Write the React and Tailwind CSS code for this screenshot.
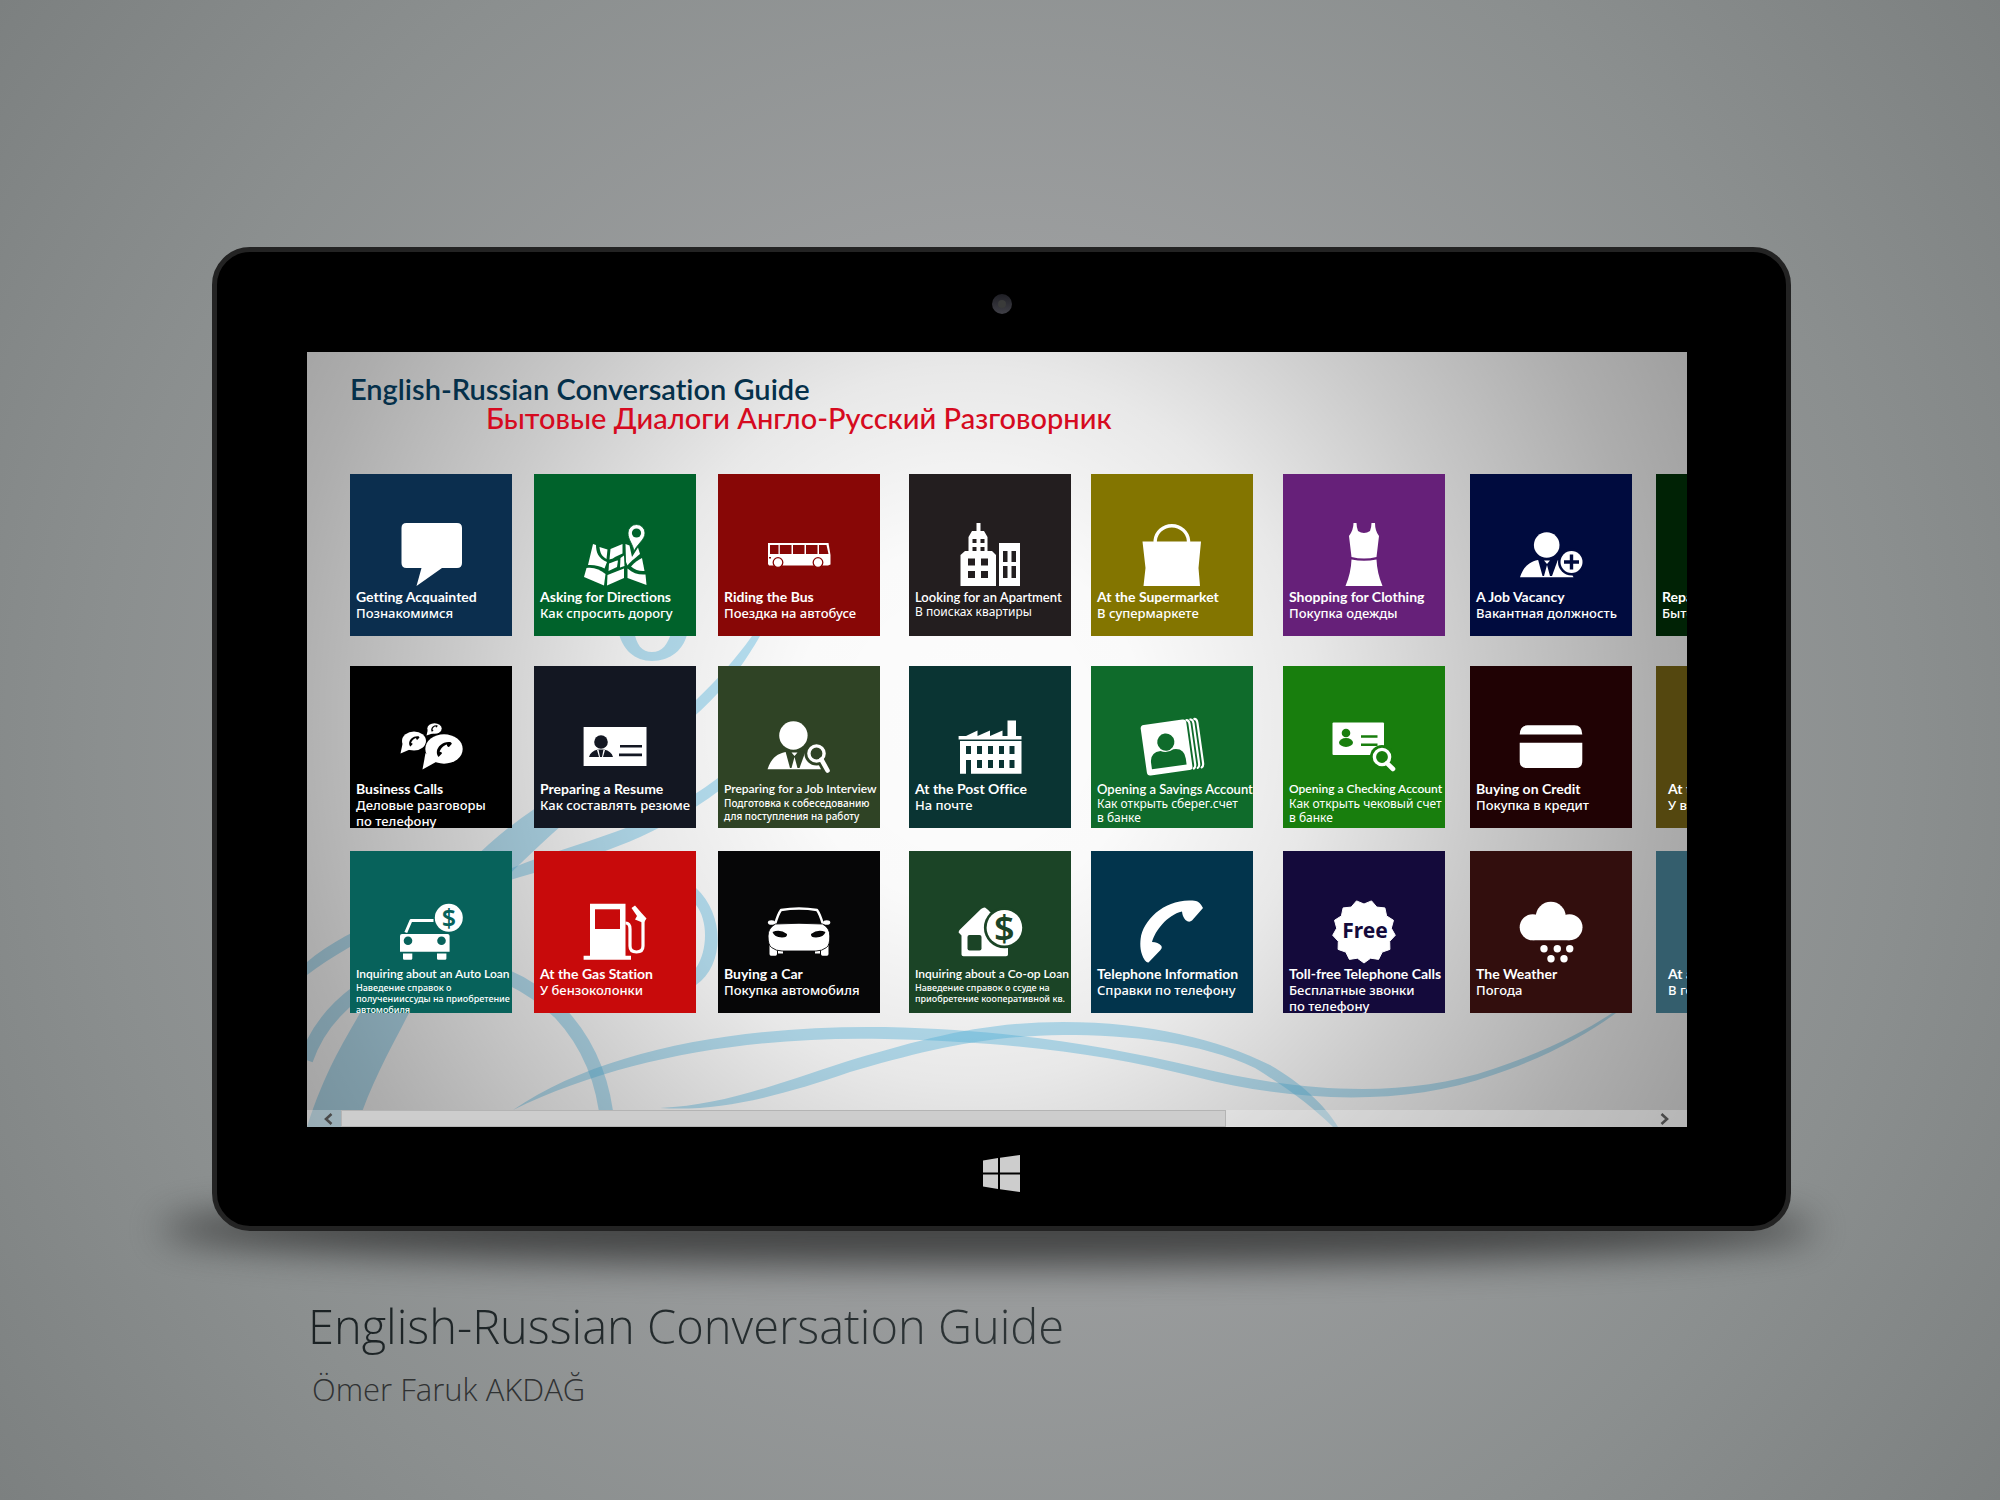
import React from 'react';

const heading = "font-['Lato','Noto_Sans',sans-serif] [font-variant-ligatures:none]";
const caption = "font-['Noto_Sans','Open_Sans',sans-serif]";

/* ---------- tile pictograms, all drawn in a 162 x 115 box ---------- */

function Suit({ bg }) {
  return (
    <>
      <path d="M50 103.3C53 94 58 88 68 86H87C93 88 98 92 103.5 103.3Z" fill="#fff" />
      <path d="M68 85.5H88L82 102H72.5Z" fill={bg} />
      <path d="M74 86.5H80L77 90Z M77 91L80 102H74Z" fill="#fff" />
    </>
  );
}

function Lens({ cx, cy, r, hx, hy, bg }) {
  return (
    <>
      <circle cx={cx} cy={cy} r={r + 4.5} fill={bg} />
      <circle cx={cx} cy={cy} r={r} fill={bg} stroke="#fff" strokeWidth="3.4" />
      <path d={`M${cx + r * 0.65} ${cy + r * 0.8}L${hx} ${hy}`} stroke="#fff" strokeWidth="4.6" strokeLinecap="round" />
    </>
  );
}

function Dollar({ cx, cy, size, fill }) {
  return (
    <text x={cx} y={cy} fill={fill} fontSize={size} fontWeight="600" textAnchor="middle" fontFamily="Noto Sans, sans-serif">
      $
    </text>
  );
}

function Handset({ x, y, s, fill }) {
  return (
    <path
      transform={`translate(${x} ${y}) scale(${s})`}
      fill={fill}
      d="M105 50Q109 51 112 57L101 69.5Q98 72 94.500 69Q91.500 66 91 60.500C76 64 64 80 61 91Q67 91 70.500 95Q71.500 97 69.500 99L57.500 111.500Q56 112 54 109.500C49 102 49 94 49.600 88C52 68 76 46 105 50Z"
    />
  );
}

function Badge() {
  const points = Array.from({ length: 26 }, (_, i) => {
    const r = i % 2 === 0 ? 31.5 : 27.5;
    const a = (Math.PI * i) / 13 + Math.PI / 2;
    return `${(81 + r * Math.cos(a)).toFixed(1)},${(80.5 + r * Math.sin(a)).toFixed(1)}`;
  }).join(' ');
  return <polygon points={points} fill="#fff" stroke="#fff" strokeWidth="1" strokeLinejoin="round" />;
}

const icons = {
  speech: () => (
    <path fill="#fff" d="M56.500 49H107Q112 49 112 54V89Q112 94 107 94H92L66.500 112L71.500 94H56.500Q51.500 94 51.500 89V54Q51.500 49 56.500 49Z" />
  ),
  map: ({ bg }) => (
    <g fill="#fff">
      <path d="M59 70L62 71C62 78 64 84 73 88L70.500 94.500C66 92 60 90.500 54 91Z" />
      <path d="M65.500 73L73.500 75.500L72.500 85C67 82 66 78 65.500 73Z" />
      <path d="M52.500 94C60 93 66 95.500 71.500 100L70 111.500L50 103Z" />
      <path d="M76.500 75L88.500 70V79.500L81 83C79 84.500 77.500 85 75.500 85.500Z" />
      <path d="M75 89.500C79 88 82 86.500 84 86.500L83 93L74.500 97Z" />
      <path d="M86.500 84L90 81.500L90.500 92L86 93.500Z" />
      <path d="M73.500 101L90 94.500V104L73 111.500Z" />
      <path d="M91.500 70L95.500 71.500L98 83L104 73.500L106 80C100 85 96 88 93.500 91.500L92 88Z" />
      <path d="M97 92.500C101 88 104.500 86 108 84L110.500 97C106 97.500 101 96 97 92.500Z" />
      <path d="M93.500 94.500C99 99.500 105 101 111.500 100.500L112.500 111L93.500 104Z" />
      <path d="M100 77.500C99 70 94 66 94 59A8.500 8.500 0 0 1 111 59C111 66 103 70 100 77.500Z" stroke={bg} strokeWidth="0.8" />
      <circle cx="102.500" cy="59" r="4.600" fill={bg} />
    </g>
  ),
  bus: ({ bg }) => (
    <>
      <path fill="#fff" d="M50 69H110.500L112.500 81V90.500L110 91.500H51L50 90Z" />
      <path fill={bg} d="M52 71H60.500V80H52Z M61.800 71H73.500V80H61.800Z M75 71H86.500V80H75Z M88 71H99.500V80H88Z M101 71H108.500L110.500 80H101Z M51 83H53V84.500H51Z" />
      <g fill="#fff" stroke={bg} strokeWidth="1.300">
        <circle cx="60" cy="88.500" r="4.800" />
        <circle cx="100" cy="88.500" r="4.800" />
      </g>
    </>
  ),
  apartment: ({ bg }) => (
    <>
      <path fill="#fff" d="M67.500 49H71.500V57H75L78.500 63V77H83L87 81V112H51.500V81L56 77H59.500V63L63 57H67.500Z M90 69H111V112H90Z" />
      <path fill={bg} d="M63.500 65H67.500V69H63.500Z M71.500 65H75.500V69H71.500Z M63.500 73H67.500V77H63.500Z M71.500 73H75.500V77H71.500Z M59 84.500H66V91.500H59Z M72 84.500H79V91.500H72Z M59 97H66V104H59Z M72 97H79V104H72Z M94 77H98.500V88H94Z M102.500 77H107V88H102.500Z M94 92H98.500V104H94Z M102.500 92H107V104H102.500Z" />
    </>
  ),
  bag: () => (
    <>
      <path fill="#fff" d="M51.500 67.500H110L107.500 94L109 112H52.500L54.500 94Z" />
      <path d="M64.200 69V66.500A16.700 16 0 0 1 97.500 66.500V69" fill="none" stroke="#fff" strokeWidth="3.400" />
    </>
  ),
  dress: () => (
    <path fill="#fff" d="M70.500 49H73.500Q73.500 53 75 57Q81 61 87 57Q88.500 53 88.500 49H92Q92 57 96 62L93.500 83Q81 86 68.500 83L66 62Q70.500 56 70.500 49Z M68.500 85.500Q81 88 93.500 85.500Q94 99 99.500 112H62.500Q68 99 68.500 85.500Z" />
  ),
  vacancy: ({ bg }) => (
    <>
      <circle cx="76.700" cy="71" r="12.800" fill="#fff" />
      <Suit bg={bg} />
      <circle cx="101.500" cy="88" r="13.500" fill={bg} />
      <circle cx="101.500" cy="88" r="11" fill="#fff" />
      <path d="M101.500 80.500V95.500M94 88H109" stroke={bg} strokeWidth="3.400" />
    </>
  ),
  calls: ({ bg }) => (
    <>
      <g fill="#fff">
        <ellipse cx="84.500" cy="62.500" rx="7.200" ry="5.300" />
        <path d="M78 63L76.500 69.500L84 67Z" />
        <ellipse cx="64" cy="75" rx="12" ry="9.600" />
        <path d="M52.500 78L50.500 87.500L61 83Z" />
      </g>
      <ellipse cx="94" cy="83" rx="19.500" ry="15.700" fill={bg} />
      <g fill="#fff">
        <ellipse cx="94" cy="83" rx="18.700" ry="14.700" />
        <path d="M75.500 87L72.500 103.500L86 96Z" />
      </g>
      <Handset x={75} y={64} s={0.240} fill={bg} />
      <Handset x={51} y={62} s={0.165} fill={bg} />
      <Handset x={76} y={54} s={0.105} fill={bg} />
    </>
  ),
  resume: ({ bg }) => (
    <>
      <path fill="#fff" d="M49.600 61H112.500V100H49.600Z" />
      <g fill={bg}>
        <circle cx="67" cy="76" r="6.800" />
        <path d="M55 91C56 87 59 84.500 64 83.500H70C75 84.500 78 87 79 91Z" />
        <path d="M86 79H108V81.600H86Z M85 87.600H108V90.200H85Z" />
      </g>
      <path fill="#fff" d="M64.500 83.500L66 91H65L63 84Z M69.500 83.500L68 91H69L71 84Z" />
    </>
  ),
  interview: ({ bg }) => (
    <>
      <circle cx="75.400" cy="69.500" r="14.200" fill="#fff" />
      <g transform="translate(-0.500 0)">
        <Suit bg={bg} />
      </g>
      <Lens cx={98.500} cy={87.500} r={7.600} hx={109.500} hy={104.500} bg={bg} />
    </>
  ),
  factory: ({ bg }) => (
    <>
      <path fill="#fff" d="M49.600 70H57L68.500 64.500V70L81 64.500V70L93.500 64.500V70H98.500V54.500H107V70H112.500V73.500H49.600Z M51 75H112.500V107.700H51Z" />
      <path fill={bg} d="M57 80H62V88H57Z M68 80H73V88H68Z M79 80H84V88H79Z M90 80H95V88H90Z M100.500 80H105.500V88H100.500Z M57 94H62V108H57Z M68 94H73V102H68Z M79 94H84V102H79Z M90 94H95V102H90Z M100.500 94H105.500V102H100.500Z" />
    </>
  ),
  savings: ({ bg }) => (
    <g transform="rotate(-8 76 81)">
      <rect x="52.500" y="56" width="46" height="51" rx="3.500" fill="#fff" />
      <g fill="none" stroke="#fff" strokeWidth="2.200" strokeLinecap="round">
        <path d="M99 57Q101.500 57.500 101.500 61V102Q101.500 105 99.500 106" />
        <path d="M103 57Q105.500 57.500 105.500 61V102Q105.500 105 103.500 106" />
        <path d="M107 57Q109.500 57.500 109.500 61V102Q109.500 105 107.500 106" />
      </g>
      <circle cx="75.500" cy="76" r="8.600" fill={bg} />
      <path fill={bg} d="M58 101V95Q58 84 69 84Q75.500 87.500 82 84Q93 84 93 95V101Z" />
    </g>
  ),
  checking: ({ bg }) => (
    <>
      <rect x="49.500" y="56.500" width="51.500" height="32.500" rx="1" fill="#fff" />
      <g fill={bg}>
        <circle cx="63" cy="67" r="4.300" />
        <ellipse cx="63" cy="76.500" rx="7" ry="4.400" />
        <path d="M78 69.200H94.500V71.800H78Z M78 77.400H94.500V80H78Z" />
      </g>
      <Lens cx={99} cy={91} r={7.600} hx={110} hy={103} bg={bg} />
    </>
  ),
  credit: () => (
    <path fill="#fff" d="M57.500 59.300H104.500Q112 59.300 112.300 68.500H49.700Q50 59.300 57.500 59.300Z M49.700 76.700H112.300V95Q112.300 102 105.500 102H56.500Q49.700 102 49.700 95Z" />
  ),
  autoLoan: ({ bg }) => (
    <>
      <path fill="#fff" d="M52 83H97.500Q99.600 83 99.600 85V100.700H50V85Q50 83 52 83Z M53 102.500H62.300V107.500Q62.300 108.700 61 108.700H54.300Q53 108.700 53 107.500Z M87 102.500H96.400V107.500Q96.400 108.700 95 108.700H88.300Q87 108.700 87 107.500Z" />
      <path d="M55.800 81.500L61 69.500H83.500" fill="none" stroke="#fff" strokeWidth="3" strokeLinejoin="round" />
      <circle cx="58" cy="89.700" r="4.300" fill={bg} />
      <circle cx="91.500" cy="89.700" r="4.300" fill={bg} />
      <circle cx="98.800" cy="66.800" r="14" fill="#fff" />
      <Dollar cx={98.800} cy={76} size={25} fill={bg} />
    </>
  ),
  gas: ({ bg }) => (
    <>
      <path fill="#fff" d="M56 52.700H91.500V104.700H97V108.700H49.600V104.700H56Z" />
      <path fill={bg} d="M61 58.300H86V78H61Z" />
      <path d="M91.500 72Q96 72 96 78V95Q96 101 102.500 101Q109 101 109 95V70" fill="none" stroke="#fff" strokeWidth="3.200" />
      <path d="M97.500 57L101 54.500L107.500 62L112.500 67.500L109.500 72L101 68.500L103 65Z" fill="#fff" />
    </>
  ),
  car: ({ bg }) => (
    <>
      <g fill="#fff">
        <path d="M51.500 94H59V103Q59 104.700 57.500 104.700H53Q51.500 104.700 51.500 103Z M103 94H110.500V103Q110.500 104.700 109 104.700H104.500Q103 104.700 103 103Z M60 99.500H65V102.500H60Z M97 99.500H102V102.500H97Z" />
        <ellipse cx="53.500" cy="71.500" rx="3.600" ry="2.300" />
        <ellipse cx="108.700" cy="71.500" rx="3.600" ry="2.300" />
      </g>
      <path d="M57 73.500Q60 63 63 59Q81 56 99 59Q102 63 105 73.500" fill="none" stroke="#fff" strokeWidth="2.400" />
      <path fill="#fff" stroke={bg} strokeWidth="0.900" d="M57.500 73Q81 71.500 104.500 73Q112 77 111.800 85Q112 94 108.500 96.500Q104 100 98 100H64Q58 100 53.500 96.500Q50 94 50 85Q50 77 57.500 73Z" />
      <path fill={bg} d="M54.500 81Q62 77.500 69 83Q69.500 86.500 64 86.500Q56 86 54.500 81Z M107.500 81Q100 77.500 93 83Q92.500 86.500 98 86.500Q106 86 107.500 81Z" />
    </>
  ),
  coop: ({ bg }) => (
    <>
      <path fill="#fff" d="M75.400 56.500Q77 56.500 81 61L99 80V103.500Q99 105.300 97 105.300H54.500Q52.500 105.300 52.500 103.500V84.500L49.600 81.500Q49.600 80 51 78.500L72 58Q74 56.500 75.400 56.500Z" />
      <rect x="58.500" y="84" width="14" height="15.500" rx="2" fill={bg} />
      <circle cx="95.400" cy="76.700" r="20.500" fill={bg} />
      <circle cx="95.400" cy="76.700" r="17.800" fill="#fff" />
      <Dollar cx={95.400} cy={89.500} size={36} fill={bg} />
    </>
  ),
  phone: () => <Handset x={0} y={0} s={1} fill="#fff" />,
  free: ({ bg }) => (
    <>
      <Badge />
      <text x="82" y="87" fontSize="21" fontWeight="700" textAnchor="middle" fill={bg} fontFamily="Noto Sans, sans-serif">
        Free
      </text>
    </>
  ),
  weather: () => (
    <g fill="#fff">
      <circle cx="62.700" cy="76.300" r="13" />
      <circle cx="99.500" cy="76.300" r="13" />
      <circle cx="80.800" cy="65.800" r="15" />
      <path d="M62.700 68H99.500V89.300H62.700Z" />
      <circle cx="74" cy="97.700" r="3.700" />
      <circle cx="87.300" cy="97.700" r="3.700" />
      <circle cx="99.700" cy="97.700" r="3.700" />
      <circle cx="81" cy="107.700" r="3.700" />
      <circle cx="94" cy="107.700" r="3.700" />
    </g>
  ),
  none: () => null,
};

/* ---------- data ---------- */

const EN = {
  lg: 'text-sm leading-4 font-bold',
  md: 'text-[13px] leading-4 font-semibold',
  sm: 'text-xs leading-4 font-semibold',
};
const RU = {
  lg: 'text-[13px] leading-4 font-medium',
  md: 'text-xs leading-[14px] font-normal',
  sm: 'text-[10px] leading-[13px] font-medium',
  xs: 'text-[9px] leading-[11px] font-medium',
};

const tiles = [
  { en: 'Getting Acquainted', ru: ['Познакомимся'], bg: '#0b2e4e', color: 'bg-[#0b2e4e]', icon: 'speech' },
  { en: 'Asking for Directions', ru: ['Как спросить дорогу'], bg: '#00622b', color: 'bg-[#00622b]', icon: 'map' },
  { en: 'Riding the Bus', ru: ['Поездка на автобусе'], bg: '#880706', color: 'bg-[#880706]', icon: 'bus' },
  { en: 'Looking for an Apartment', ru: ['В поисках квартиры'], bg: '#231e1f', color: 'bg-[#231e1f]', icon: 'apartment', enSize: 'md', ruSize: 'md' },
  { en: 'At the Supermarket', ru: ['В супермаркете'], bg: '#837500', color: 'bg-[#837500]', icon: 'bag' },
  { en: 'Shopping for Clothing', ru: ['Покупка одежды'], bg: '#662079', color: 'bg-[#662079]', icon: 'dress' },
  { en: 'A Job Vacancy', ru: ['Вакантная должность'], bg: '#000b3e', color: 'bg-[#000b3e]', icon: 'vacancy' },
  { en: 'Repairs', ru: ['Бытовой ремонт'], bg: '#002205', color: 'bg-[#002205]', icon: 'none' },

  { en: 'Business Calls', ru: ['Деловые разговоры', 'по телефону'], bg: '#000000', color: 'bg-black', icon: 'calls' },
  { en: 'Preparing a Resume', ru: ['Как составлять резюме'], bg: '#131722', color: 'bg-[#131722]', icon: 'resume' },
  { en: 'Preparing for a Job Interview', ru: ['Подготовка к собеседованию', 'для поступления на работу'], bg: '#2f4325', color: 'bg-[#2f4325]', icon: 'interview', enSize: 'sm', ruSize: 'sm' },
  { en: 'At the Post Office', ru: ['На почте'], bg: '#0a3433', color: 'bg-[#0a3433]', icon: 'factory' },
  { en: 'Opening a Savings Account', ru: ['Как открыть сберег.счет', 'в банке'], bg: '#0f6b2b', color: 'bg-[#0f6b2b]', icon: 'savings', enSize: 'md', ruSize: 'md' },
  { en: 'Opening a Checking Account', ru: ['Как открыть чековый счет', 'в банке'], bg: '#187e0d', color: 'bg-[#187e0d]', icon: 'checking', enSize: 'sm', ruSize: 'md' },
  { en: 'Buying on Credit', ru: ['Покупка в кредит'], bg: '#200204', color: 'bg-[#200204]', icon: 'credit' },
  { en: 'At the Doctor', ru: ['У врача'], bg: '#54470f', color: 'bg-[#54470f]', icon: 'none', inset: true },

  { en: 'Inquiring about an Auto Loan', ru: ['Наведение справок о', 'полученииссуды на приобретение', 'автомобиля'], bg: '#07625b', color: 'bg-[#07625b]', icon: 'autoLoan', enSize: 'sm', ruSize: 'xs' },
  { en: 'At the Gas Station', ru: ['У бензоколонки'], bg: '#c80a0b', color: 'bg-[#c80a0b]', icon: 'gas' },
  { en: 'Buying a Car', ru: ['Покупка автомобиля'], bg: '#060607', color: 'bg-[#060607]', icon: 'car' },
  { en: 'Inquiring about a Co-op Loan', ru: ['Наведение справок о ссуде на', 'приобретение кооперативной кв.'], bg: '#1b4426', color: 'bg-[#1b4426]', icon: 'coop', enSize: 'sm', ruSize: 'xs' },
  { en: 'Telephone Information', ru: ['Справки по телефону'], bg: '#02344c', color: 'bg-[#02344c]', icon: 'phone' },
  { en: 'Toll-free Telephone Calls', ru: ['Бесплатные звонки', 'по телефону'], bg: '#140a3b', color: 'bg-[#140a3b]', icon: 'free' },
  { en: 'The Weather', ru: ['Погода'], bg: '#320e0d', color: 'bg-[#320e0d]', icon: 'weather' },
  { en: 'At a Hotel', ru: ['В гостинице'], bg: '#345e6d', color: 'bg-[#345e6d]', icon: 'none', inset: true },
];

function Tile({ en, ru, bg, color, icon, enSize = 'lg', ruSize = 'lg', inset }) {
  const Icon = icons[icon];
  return (
    <button type="button" className={`${color} flex size-[162px] flex-col overflow-hidden text-left whitespace-nowrap text-white`}>
      <svg viewBox="0 0 162 115" className="h-[115px] w-full shrink-0" fill="none" aria-hidden="true">
        <Icon bg={bg} />
      </svg>
      <span className={`flex flex-col ${inset ? 'pl-3' : 'pl-1.5'}`}>
        <span className={`${heading} ${EN[enSize]}`}>{en}</span>
        {ru.map((line) => (
          <span key={line} className={`${caption} ${RU[ruSize]}`}>
            {line}
          </span>
        ))}
      </span>
    </button>
  );
}

function Swirls() {
  return (
    <svg viewBox="307 352 1380 775" className="absolute top-0 left-0 h-[775px] w-[1380px]" fill="#58bce6" fillOpacity="0.42" aria-hidden="true">
      <path d="M307 1127C325 1070 345 1040 360 1013C400 930 450 880 488 845C560 780 640 760 696 700C715 682 735 660 752 636H760C745 662 735 675 718 693C680 735 610 780 540 845C470 910 430 960 409 1013C390 1050 370 1085 357 1127Z" />
      <path d="M307 962C350 925 430 900 512 868C580 840 650 830 718 778L720 790C660 835 600 855 534 873C440 900 360 935 307 975Z" />
      <path d="M696 888C725 915 725 965 696 985V968C708 950 708 920 696 905Z" />
      <path
        d="M306 1060C325 1005 380 968 430 964C480 962 520 975 560 1013C590 1045 605 1085 608 1130"
        fill="none"
        stroke="#58bce6"
        strokeOpacity="0.42"
        strokeWidth="14"
      />
      <path d="M513 1110C600 1050 740 1025 885 1027C1010 1030 1100 1045 1196 1067C1290 1090 1400 1101 1493 1069C1550 1050 1590 1028 1612 1013H1616C1590 1032 1550 1056 1493 1075C1400 1108 1290 1101 1196 1077C1100 1053 1010 1042 885 1039C750 1036 620 1058 513 1110Z" />
      <path d="M660 1108C720 1105 760 1090 845 1062C920 1040 980 1022 1063 1022C1150 1022 1220 1040 1270 1065C1300 1082 1325 1105 1338 1127H1333C1310 1105 1290 1090 1255 1068C1200 1042 1130 1035 1063 1035C980 1036 920 1052 850 1072C780 1096 720 1112 660 1108Z" />
      <path d="M618 630C622 650 635 661 652 661C670 661 685 650 688 630H672C668 645 662 652 652 652C642 652 636 645 634 630Z" />
    </svg>
  );
}

function ScrollBar() {
  return (
    <div className="relative flex h-[17px] items-center justify-between bg-white/25 text-[#4a4a4a]">
      <button type="button" aria-label="Scroll left" className="flex h-full w-[34px] items-center justify-end pr-2">
        <svg viewBox="0 0 10 12" className="h-3 w-2.5" aria-hidden="true">
          <path d="M8.500 1L3 6L8.500 11" fill="none" stroke="currentColor" strokeWidth="2.600" />
        </svg>
      </button>
      <div className="h-full flex-1">
        <div className="h-full w-[68%] border border-[#b4b4b4] bg-[#cdcdcd]" />
      </div>
      <button type="button" aria-label="Scroll right" className="flex h-full w-11 items-center justify-center">
        <svg viewBox="0 0 10 12" className="h-3 w-2.5" aria-hidden="true">
          <path d="M1.500 1L7 6L1.500 11" fill="none" stroke="currentColor" strokeWidth="2.600" />
        </svg>
      </button>
    </div>
  );
}

export default function App() {
  return (
    <main className="min-h-screen overflow-hidden bg-[radial-gradient(circle_at_center,#a1a3a5_0%,#9b9d9e_40%,#8b8f8f_72%,#7c8080_100%)] pt-[247px] pr-[209px] pb-20 pl-[212px]">
      <div className="relative">
        <div className="absolute right-[-24px] bottom-[-36px] left-[-52px] h-[76px] rounded-[50%] bg-[#3c3d3d] opacity-90 blur-[18px]" />
        <section className="relative rounded-[38px] border-[5px] border-[#232323] bg-black pr-[99px] pl-[90px]">
          <div className="-mr-[9px] flex h-[100px] items-center justify-center pt-1">
            <div className="flex size-5 items-center justify-center rounded-full bg-linear-to-b from-[#1f1f25] to-[#404047]">
              <div className="size-2 rounded-full bg-[#3a3b3a]" />
            </div>
          </div>

          <div className="relative overflow-hidden bg-white">
            <Swirls />
            <div className="absolute inset-0 bg-[radial-gradient(ellipse_50%_92%_at_48%_48%,rgba(0,0,0,0.01)_0%,rgba(0,0,0,0.02)_25%,rgba(0,0,0,0.09)_50%,rgba(0,0,0,0.21)_75%,rgba(0,0,0,0.32)_100%,rgba(0,0,0,0.39)_120%)]" />
            <div className="relative pt-[22px] pl-[43px]">
              <header className={`${heading} text-[29px] leading-[29px]`}>
                <h1 className="font-semibold text-[#05304a]">English-Russian Conversation Guide</h1>
                <p className="pl-[136px] font-medium text-[#d60a20]">Бытовые Диалоги Англо-Русский Разговорник</p>
              </header>
              <div className="mt-[42px] grid grid-cols-[184px_184px_191px_182px_192px_187px_186px_162px] grid-rows-[192px_185px_162px] pb-[97px]">
                {tiles.map((t) => (
                  <Tile key={t.en} {...t} />
                ))}
              </div>
            </div>
            <ScrollBar />
          </div>

          <div className="-mr-[9px] flex h-[99px] justify-center pt-7">
            <svg viewBox="0 0 37 37" className="size-[37px]" fill="#cdcdcd" role="img" aria-label="Windows">
              <path d="M0 5.500L15 3V17.500H0Z M17 2.700L37 0V17.500H17Z M0 19.500H15V34L0 31.500Z M17 19.500H37V37L17 34.300Z" />
            </svg>
          </div>
        </section>
      </div>

      <footer className="relative pt-[62px] pl-24 font-['Open_Sans','Noto_Sans',sans-serif] font-light">
        <h2 className="bg-linear-to-r from-[#1b2224] to-[#41484a] bg-clip-text text-[47px] leading-[66px] text-transparent">
          English-Russian Conversation Guide
        </h2>
        <p className="pl-1 text-[31px] leading-[60px] text-[#303233]">Ömer Faruk AKDAĞ</p>
      </footer>
    </main>
  );
}
